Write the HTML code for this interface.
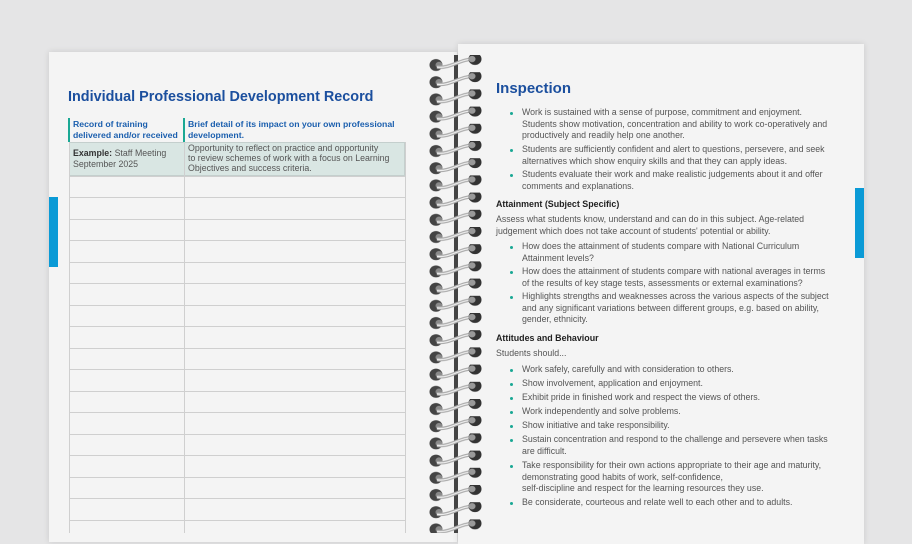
<!DOCTYPE html>
<html><head><meta charset="utf-8"><style>
*{margin:0;padding:0;box-sizing:border-box}
body{width:912px;height:533px;overflow:hidden;background:#e5e5e6;font-family:"Liberation Sans",sans-serif;position:relative}
.pg{position:absolute;background:#f4f4f4;box-shadow:0 0 6px rgba(0,0,0,.12)}
.t{position:absolute;white-space:nowrap;font-size:8.8px;color:#555;line-height:11.5px}
.b{position:absolute;width:3px;height:3px;border-radius:50%;background:#1aa894}
.h{position:absolute;white-space:nowrap;font-size:8.9px;font-weight:bold;color:#222}
.row{position:absolute;left:69px;width:336px;height:1px;background:#cfcfcf}
</style></head><body>
<div class="pg" style="left:49px;top:52px;width:408px;height:490px"></div>
<div class="pg" style="left:458px;top:44px;width:406px;height:500px"></div>
<div style="position:absolute;left:49px;top:197px;width:9px;height:70px;background:#0a9ad6"></div>
<div style="position:absolute;left:855px;top:188px;width:9px;height:70px;background:#0a9ad6"></div>

<div style="position:absolute;left:68px;top:89px;font-size:14.4px;font-weight:bold;color:#1b4f9e;white-space:nowrap">Individual Professional Development Record</div>
<div style="position:absolute;left:68px;top:118px;width:2px;height:24px;background:#1aa894"></div>
<div style="position:absolute;left:183px;top:118px;width:2px;height:24px;background:#1aa894"></div>
<div style="position:absolute;left:73px;top:119px;font-size:8.7px;font-weight:bold;color:#1b5fae;line-height:10.5px;white-space:nowrap">Record of training<br>delivered and/or received</div>
<div style="position:absolute;left:188px;top:119px;font-size:8.7px;font-weight:bold;color:#1b5fae;line-height:10.5px;white-space:nowrap">Brief detail of its impact on your own professional<br>development.</div>
<div style="position:absolute;left:69px;top:142px;width:336px;height:34px;background:#d9e6e3;border:1px solid #c4cfcd"></div>
<div style="position:absolute;left:184px;top:142px;width:1px;height:391px;background:#cfcfcf"></div>
<div style="position:absolute;left:69px;top:142px;width:1px;height:391px;background:#cfcfcf"></div>
<div style="position:absolute;left:405px;top:142px;width:1px;height:391px;background:#cfcfcf"></div>
<div class="t" style="left:73px;top:148px;line-height:10.5px;color:#555"><b style="color:#333">Example:</b> Staff Meeting<br>September 2025</div>
<div class="t" style="left:188px;top:143px;line-height:10.2px">Opportunity to reflect on practice and opportunity<br>to review schemes of work with a focus on Learning<br>Objectives and success criteria.</div>
<div class="row" style="top:176px"></div><div class="row" style="top:197px"></div><div class="row" style="top:219px"></div><div class="row" style="top:240px"></div><div class="row" style="top:262px"></div><div class="row" style="top:283px"></div><div class="row" style="top:305px"></div><div class="row" style="top:326px"></div><div class="row" style="top:348px"></div><div class="row" style="top:369px"></div><div class="row" style="top:391px"></div><div class="row" style="top:412px"></div><div class="row" style="top:434px"></div><div class="row" style="top:455px"></div><div class="row" style="top:477px"></div><div class="row" style="top:498px"></div><div class="row" style="top:520px"></div>

<svg style="position:absolute;left:420px;top:40px" width="80" height="493">
<defs><pattern id="p" x="0" y="15" width="80" height="17.2" patternUnits="userSpaceOnUse">
<ellipse cx="16" cy="10" rx="6.5" ry="6" fill="#444"/>
<ellipse cx="19" cy="10" rx="3.5" ry="3.2" fill="#8a8a8a"/>
<path d="M17 12 C30 14 40 4 54 4" stroke="#aaa" stroke-width="3.5" fill="none"/>
<path d="M17 12 C30 14 40 4 54 4" stroke="#f0f0f0" stroke-width="1.2" fill="none"/>
<ellipse cx="55" cy="4" rx="6.5" ry="6" fill="#333"/>
<ellipse cx="52" cy="4" rx="3.5" ry="3.2" fill="#999"/>
</pattern></defs>
<rect x="34" y="15" width="4" height="478" fill="#444"/>
<rect x="0" y="15" width="80" height="478" fill="url(#p)"/>
</svg>

<div style="position:absolute;left:496px;top:80px;font-size:15px;font-weight:bold;color:#1b4f9e">Inspection</div>
<div class="b" style="left:510px;top:112px"></div><div class="t" style="left:522px;top:107px">Work is sustained with a sense of purpose, commitment and enjoyment.<br>Students show motivation, concentration and ability to work co-operatively and<br>productively and readily help one another.</div>
<div class="b" style="left:510px;top:149px"></div><div class="t" style="left:522px;top:144px">Students are sufficiently confident and alert to questions, persevere, and seek<br>alternatives which show enquiry skills and that they can apply ideas.</div>
<div class="b" style="left:510px;top:174px"></div><div class="t" style="left:522px;top:169px">Students evaluate their work and make realistic judgements about it and offer<br>comments and explanations.</div>
<div class="h" style="left:496px;top:199px">Attainment (Subject Specific)</div>
<div class="t" style="left:496px;top:214px">Assess what students know, understand and can do in this subject. Age-related<br>judgement which does not take account of students' potential or ability.</div>
<div class="b" style="left:510px;top:246px"></div><div class="t" style="left:522px;top:241px">How does the attainment of students compare with National Curriculum<br>Attainment levels?</div>
<div class="b" style="left:510px;top:271px"></div><div class="t" style="left:522px;top:266px">How does the attainment of students compare with national averages in terms<br>of the results of key stage tests, assessments or external examinations?</div>
<div class="b" style="left:510px;top:296px"></div><div class="t" style="left:522px;top:291px">Highlights strengths and weaknesses across the various aspects of the subject<br>and any significant variations between different groups, e.g. based on ability,<br>gender, ethnicity.</div>
<div class="h" style="left:496px;top:333px">Attitudes and Behaviour</div>
<div class="t" style="left:496px;top:348px">Students should...</div>
<div class="b" style="left:510px;top:369px"></div><div class="t" style="left:522px;top:364px">Work safely, carefully and with consideration to others.</div>
<div class="b" style="left:510px;top:383px"></div><div class="t" style="left:522px;top:378px">Show involvement, application and enjoyment.</div>
<div class="b" style="left:510px;top:397px"></div><div class="t" style="left:522px;top:392px">Exhibit pride in finished work and respect the views of others.</div>
<div class="b" style="left:510px;top:411px"></div><div class="t" style="left:522px;top:406px">Work independently and solve problems.</div>
<div class="b" style="left:510px;top:425px"></div><div class="t" style="left:522px;top:420px">Show initiative and take responsibility.</div>
<div class="b" style="left:510px;top:439px"></div><div class="t" style="left:522px;top:434px">Sustain concentration and respond to the challenge and persevere when tasks<br>are difficult.</div>
<div class="b" style="left:510px;top:465px"></div><div class="t" style="left:522px;top:460px">Take responsibility for their own actions appropriate to their age and maturity,<br>demonstrating good habits of work, self-confidence,<br>self-discipline and respect for the learning resources they use.</div>
<div class="b" style="left:510px;top:502px"></div><div class="t" style="left:522px;top:497px">Be considerate, courteous and relate well to each other and to adults.</div>
</body></html>
